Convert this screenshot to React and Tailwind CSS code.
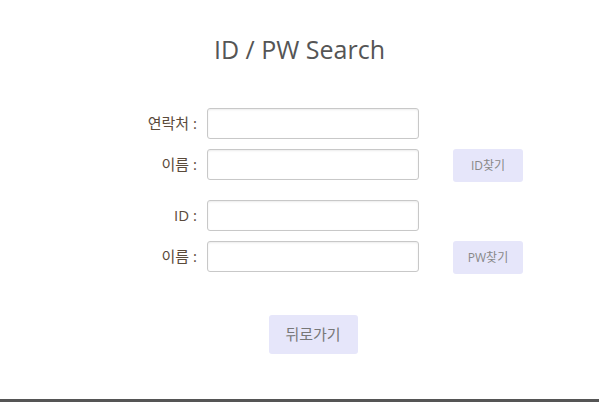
export default function App() {
  const font = { fontFamily: '"Open Sans", "Noto Sans CJK KR", sans-serif' };
  const inputCls =
    "w-[212px] h-[31px] rounded-[3px] border border-[#c8c8c8] bg-white shadow-[inset_0_1px_2px_rgba(0,0,0,0.08)] outline-none";
  const labelCls = "w-[97px] text-right text-[15px] text-[#5a4a3a] pr-[10px] leading-[31px]";
  const btnCls =
    "ml-[34px] w-[70px] h-[33px] rounded-[3px] bg-[#e6e6fa] text-[12px] text-[#888] flex items-center justify-center";
  return (
    <div className="relative w-[599px] h-[402px] bg-white" style={font}>
      <h1 className="pt-[32px] text-center text-[25px] leading-[34px] text-[#555]">ID / PW Search</h1>
      <div className="mt-[42px] ml-[110px] flex flex-col">
        <div className="flex items-start">
          <div className={labelCls}>연락처 :</div>
          <input className={inputCls} />
        </div>
        <div className="mt-[10px] flex items-start">
          <div className={labelCls}>이름 :</div>
          <input className={inputCls} />
          <button className={btnCls}>ID찾기</button>
        </div>
        <div className="mt-[18px] flex items-start">
          <div className={labelCls}>ID :</div>
          <input className={inputCls} />
        </div>
        <div className="mt-[10px] flex items-start">
          <div className={labelCls}>이름 :</div>
          <input className={inputCls} />
          <button className={btnCls}>PW찾기</button>
        </div>
      </div>
      <div className="mt-[41px] flex justify-center">
        <button className="ml-[27px] w-[89px] h-[39px] rounded-[3px] bg-[#e6e6fa] text-[15px] text-[#777]">뒤로가기</button>
      </div>
      <div className="absolute bottom-0 left-0 w-full h-[3px] bg-[#555]" />
    </div>
  );
}
